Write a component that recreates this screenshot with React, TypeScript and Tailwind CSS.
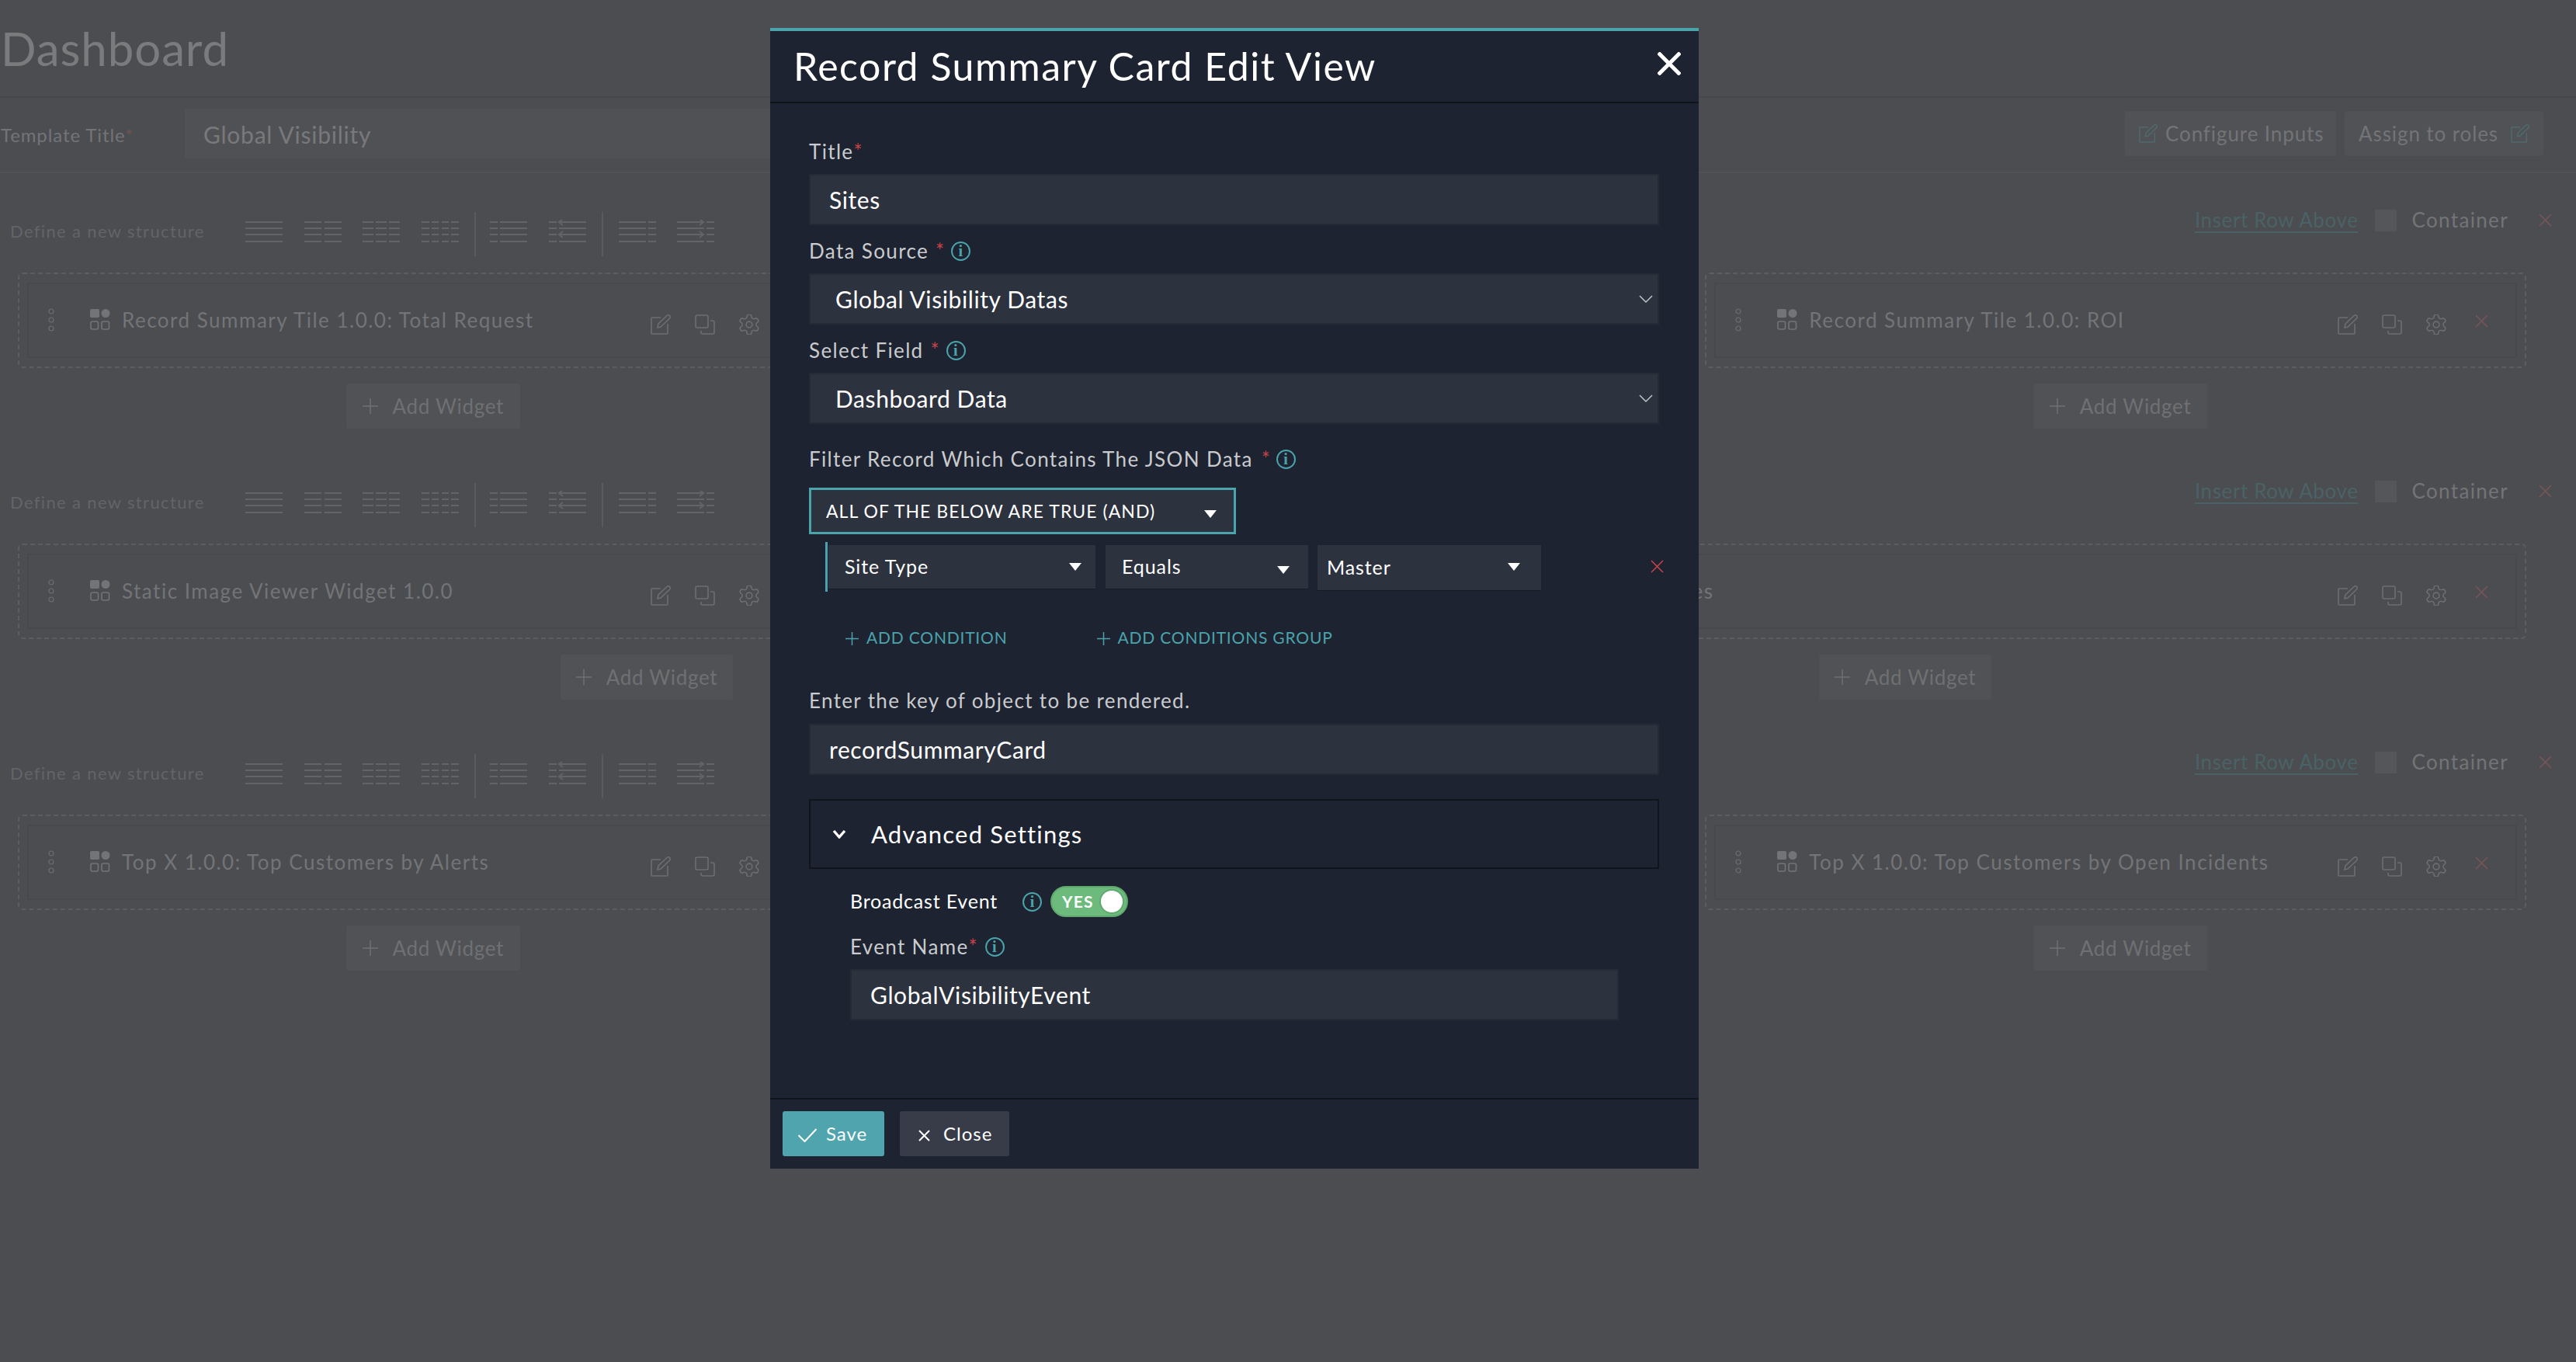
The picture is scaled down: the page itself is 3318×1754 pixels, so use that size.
import React from 'react';

const FONT = 'font-["Lato","Noto_Sans",sans-serif]';

type Seg = [number, number];

const full: Seg[] = [[0, 48]];
const two: Seg[] = [[0, 22], [26, 48]];
const three: Seg[] = [[0, 14], [17, 31], [34, 48]];
const four: Seg[] = [[0, 10], [13, 22], [26, 35], [38, 48]];
const wideLeft: Seg[] = [[0, 35], [38, 48]];
const wideRight: Seg[] = [[0, 10], [13, 48]];

const LineIcon = ({ segs, arrow }: { segs: Seg[]; arrow?: 'left' | 'right' }) => (
  <svg width="48" height="30" viewBox="0 0 48 30" className="shrink-0 text-[#636468]" stroke="currentColor" strokeWidth="2" fill="none">
    {[3, 11, 19, 28].map((y) => segs.map((s, i) => <line key={`${y}-${i}`} x1={s[0]} x2={s[1]} y1={y} y2={y} />))}
    {arrow === 'left' && (
      <>
        <path d="M18 -1 L13 3 L18 7" />
        <path d="M18 15 L13 19 L18 23" />
      </>
    )}
    {arrow === 'right' && (
      <>
        <path d="M29 -1 L34 3 L29 7" />
        <path d="M29 15 L34 19 L29 23" />
      </>
    )}
  </svg>
);

const Cross = ({ size, stroke = 1.6, className = '' }: { size: number; stroke?: number; className?: string }) => (
  <svg width={size} height={size} viewBox={`0 0 ${size} ${size}`} fill="none" stroke="currentColor" strokeWidth={stroke} className={`shrink-0 ${className}`}>
    <path d={`M1 1 L${size - 1} ${size - 1} M${size - 1} 1 L1 ${size - 1}`} />
  </svg>
);

const PlusMark = ({ size, className = '' }: { size: number; className?: string }) => (
  <svg width={size} height={size} viewBox={`0 0 ${size} ${size}`} fill="none" stroke="currentColor" strokeWidth="1.5" className={`shrink-0 ${className}`}>
    <path d={`M${size / 2} 0 V${size} M0 ${size / 2} H${size}`} />
  </svg>
);

const Chevron = () => (
  <svg width="18" height="10" viewBox="0 0 18 10" fill="none" stroke="#c9cbce" strokeWidth="1.4" className="shrink-0">
    <path d="M1 1 L9 9 L17 1" />
  </svg>
);

const EditIcon = ({ className = 'text-[#6d6e71]', size = 26 }: { className?: string; size?: number }) => (
  <svg width={size} height={size} viewBox="0 0 26 26" fill="none" stroke="currentColor" strokeWidth="1.6" className={`shrink-0 ${className}`}>
    <path d="M13 4 H2 a1 1 0 0 0 -1 1 V24 a1 1 0 0 0 1 1 H21 a1 1 0 0 0 1 -1 V12" />
    <path d="M9 17 L10 12 L21 1.5 a1.5 1.5 0 0 1 3.5 3.5 L13 16 Z" />
  </svg>
);

const CopyIcon = () => (
  <svg width="26" height="26" viewBox="0 0 26 26" fill="none" stroke="#6d6e71" strokeWidth="1.6" className="shrink-0">
    <rect x="1" y="1" width="16" height="16" rx="2" />
    <path d="M20 8 h3 a2 2 0 0 1 2 2 v13 a2 2 0 0 1 -2 2 h-13 a2 2 0 0 1 -2 -2 v-2" />
  </svg>
);

const GearIcon = () => (
  <svg width="26" height="26" viewBox="2 2 20 20" fill="none" stroke="#6d6e71" strokeWidth="1.2" className="shrink-0">
    <path d="M12.22 2h-.44a2 2 0 0 0-2 2v.18a2 2 0 0 1-1 1.73l-.43.25a2 2 0 0 1-2 0l-.15-.08a2 2 0 0 0-2.73.73l-.22.38a2 2 0 0 0 .73 2.73l.15.1a2 2 0 0 1 1 1.72v.51a2 2 0 0 1-1 1.74l-.15.09a2 2 0 0 0-.73 2.73l.22.38a2 2 0 0 0 2.73.73l.15-.08a2 2 0 0 1 2 0l.43.25a2 2 0 0 1 1 1.73V20a2 2 0 0 0 2 2h.44a2 2 0 0 0 2-2v-.18a2 2 0 0 1 1-1.73l.43-.25a2 2 0 0 1 2 0l.15.08a2 2 0 0 0 2.73-.73l.22-.39a2 2 0 0 0-.73-2.73l-.15-.08a2 2 0 0 1-1-1.74v-.5a2 2 0 0 1 1-1.74l.15-.09a2 2 0 0 0 .73-2.73l-.22-.38a2 2 0 0 0-2.73-.73l-.15.08a2 2 0 0 1-2 0l-.43-.25a2 2 0 0 1-1-1.73V4a2 2 0 0 0-2-2z" />
    <circle cx="12" cy="12" r="3" />
  </svg>
);

const TileIcon = () => (
  <svg width="26" height="27" viewBox="0 0 26 27" fill="none" className="shrink-0 text-[#737477]">
    <rect x="0" y="0" width="12" height="11" rx="2" fill="currentColor" />
    <circle cx="20" cy="5.5" r="5.5" fill="currentColor" />
    <rect x="1" y="16" width="9.5" height="10" rx="2" stroke="currentColor" strokeWidth="1.6" />
    <rect x="15" y="16" width="9.5" height="10" rx="2" stroke="currentColor" strokeWidth="1.6" />
  </svg>
);

const DragDots = () => (
  <svg width="8" height="30" viewBox="0 0 8 30" fill="none" stroke="#6d6e71" strokeWidth="1.2" className="shrink-0">
    <circle cx="4" cy="4" r="3" />
    <circle cx="4" cy="15" r="3" />
    <circle cx="4" cy="26" r="3" />
  </svg>
);

const InfoIcon = ({ className = '' }: { className?: string }) => (
  <span className={`inline-flex h-[25px] w-[25px] shrink-0 items-center justify-center rounded-full border-2 border-[#4ba3ac] font-["Liberation_Serif",serif] text-[20px] font-bold leading-none text-[#4ba3ac] ${className}`}>
    i
  </span>
);

const Req = ({ className = '' }: { className?: string }) => <span className={`text-[#c9444a] ${className}`}>*</span>;

const AddWidget = ({ className = '' }: { className?: string }) => (
  <div className={`flex h-[58px] items-center justify-center gap-[19px] rounded-[3px] bg-[#515255] text-[26px] tracking-[0.7px] text-[#6f7073] ${className}`}>
    <PlusMark size={20} />
    <span>Add Widget</span>
  </div>
);

const WidgetCard = ({ title, hasX, inner = 'w-full', addClass }: { title?: string; hasX?: boolean; inner?: string; addClass: string }) => (
  <div className="min-w-0">
    <div className="h-[123px] rounded-[6px] border-2 border-dashed border-[#5c5d60] px-[10px] pt-[11px]">
      <div className="h-[97px] border-2 border-[#49494d]">
        <div className={`flex h-full items-center pb-[2px] ${inner}`}>
          <span className="ml-[25px] mr-[46px] flex"><DragDots /></span>
          <TileIcon />
          <span className="ml-[15px] whitespace-nowrap pt-[2px] text-[26px] tracking-[1.5px] text-[#737477]">{title}</span>
          <div className="ml-auto flex items-center gap-[31px] pt-[12px]">
            <EditIcon />
            <CopyIcon />
            <GearIcon />
          </div>
          <span className="ml-[37px] mr-[35px] w-[17px] pt-[4px]">
            {hasX && <Cross size={17} stroke={1.5} className="text-[#7a5557]" />}
          </span>
        </div>
      </div>
    </div>
    <div className="flex justify-center pt-[20px]">
      <AddWidget className={addClass} />
    </div>
  </div>
);

const StructureBar = () => (
  <div className="flex h-[57px] items-center pl-[13px] pr-[31px]">
    <span className="w-[303px] pb-[8px] text-[22px] tracking-[1.35px] text-[#636468]">Define a new structure</span>
    <div className="mb-[7px] flex items-center gap-[27.5px]">
      <LineIcon segs={full} />
      <LineIcon segs={two} />
      <LineIcon segs={three} />
      <LineIcon segs={four} />
    </div>
    <div className="ml-[20px] mr-[18px] h-[57px] w-[2px] bg-[#5a5b5e]" />
    <div className="mb-[7px] flex items-center gap-[28px]">
      <LineIcon segs={wideRight} />
      <LineIcon segs={wideRight} arrow="left" />
    </div>
    <div className="mx-[20px] h-[57px] w-[2px] bg-[#5a5b5e]" />
    <div className="mb-[7px] flex items-center gap-[27px]">
      <LineIcon segs={wideLeft} />
      <LineIcon segs={wideLeft} arrow="right" />
    </div>
    <div className="ml-auto flex items-center pb-[36px] text-[26px]">
      <span className="border-b-2 border-[#4a6266] leading-[30px] tracking-[0.6px] text-[#4a6266]">Insert Row Above</span>
      <span className="ml-[22px] h-[28px] w-[28px] bg-[#555659]" />
      <span className="ml-[19px] tracking-[1.35px] text-[#737477]">Container</span>
      <Cross size={17} stroke={1.5} className="ml-[39px] text-[#7a5557]" />
    </div>
  </div>
);

const Field = ({ children, className = '' }: { children: React.ReactNode; className?: string }) => (
  <div className={`flex items-center border-2 border-[#252a35] bg-[#2c323e] text-[30px] tracking-[0.6px] text-white ${className}`}>
    {children}
  </div>
);

const Label = ({ children, className = '' }: { children: React.ReactNode; className?: string }) => (
  <div className={`flex items-center pb-[2px] text-[26px] tracking-[1.35px] text-[#c9cbce] ${className}`}>{children}</div>
);

const Caret = ({ className = '' }: { className?: string }) => (
  <svg width="16" height="10" viewBox="0 0 16 10" className={`shrink-0 ${className}`}>
    <path d="M0 0 H16 L8 10 Z" fill="#fff" />
  </svg>
);

const ConditionSelect = ({ label, className, caret = '' }: { label: string; className: string; caret?: string }) => (
  <div className={`flex shrink-0 items-center justify-between bg-[#2c323e] text-[25px] tracking-[0.9px] text-white shadow-[0_1px_0_#161a22] ${className}`}>
    <span>{label}</span>
    <Caret className={caret} />
  </div>
);

const AddLink = ({ label, className = '' }: { label: string; className?: string }) => (
  <span className={`flex items-center gap-[10px] text-[21px] uppercase tracking-[0.8px] text-[#4ba3ac] ${className}`}>
    <PlusMark size={17} className="mt-[3px]" />
    {label}
  </span>
);

const Modal = () => (
  <div className="absolute left-[992px] top-[36px] flex h-[1469px] w-[1196px] flex-col border-t-4 border-[#4ba3ac] bg-[#1d2330]">
    <div className="flex h-[93px] shrink-0 items-center justify-between border-b-2 border-[#11141b] pl-[30px] pr-[23px]">
      <span className="pb-[1px] text-[50px] tracking-[1.5px] text-white">Record Summary Card Edit View</span>
      <Cross size={30} stroke={5} className="mb-[7px] text-white" />
    </div>

    <div className="flex-1 pl-[50px] pr-[51px] pt-[45px]">
      <Label className="h-[36px]">Title<Req /></Label>
      <Field className="mt-[10px] h-[66px] pl-[24px]">Sites</Field>

      <Label className="mt-[16px] h-[36px]">Data Source<Req className="ml-[9px]" /><InfoIcon className="ml-[8px]" /></Label>
      <Field className="mt-[10px] h-[66px] justify-between pl-[32px] pr-[6px]">
        Global Visibility Datas
        <Chevron />
      </Field>

      <Label className="mt-[16px] h-[36px]">Select Field<Req className="ml-[9px]" /><InfoIcon className="ml-[8px]" /></Label>
      <Field className="mt-[10px] h-[66px] justify-between pl-[32px] pr-[6px]">
        Dashboard Data
        <Chevron />
      </Field>

      <Label className="mt-[28px] h-[36px]">Filter Record Which Contains The JSON Data<Req className="ml-[11px]" /><InfoIcon className="ml-[7px]" /></Label>

      <div className="mt-[18px] flex h-[60px] w-[550px] items-center justify-between border-[3px] border-[#4ba3ac] bg-[#2c323e] pl-[19px] pr-[22px] text-[23px] tracking-[1.05px] text-white">
        ALL OF THE BELOW ARE TRUE (AND)
        <Caret className="mt-[8px]" />
      </div>

      <div className="mt-[10px] ml-[21px] flex h-[64px] items-start border-l-[3px] border-[#4ba3ac] pl-[1px] pt-[4px]">
        <ConditionSelect label="Site Type" className="h-[56px] w-[344px] pl-[21px] pr-[18px]" />
        <ConditionSelect label="Equals" className="ml-[13px] h-[56px] w-[261px] pl-[21px] pr-[24px]" caret="mt-[8px]" />
        <ConditionSelect label="Master" className="ml-[12px] h-[58px] w-[288px] pl-[12px] pr-[27px]" caret="mb-[2px]" />
        <Cross size={17} stroke={1.5} className="ml-[141px] mt-[19px] text-[#c9444a]" />
      </div>

      <div className="mt-[43px] flex h-[32px] items-center pl-[47px]">
        <AddLink label="Add Condition" />
        <AddLink label="Add Conditions Group" className="ml-[115px]" />
      </div>

      <Label className="mt-[48px] h-[36px]">Enter the key of object to be rendered.</Label>
      <Field className="mt-[11px] h-[66px] pl-[24px]">recordSummaryCard</Field>

      <div className="mt-[31px] flex h-[90px] items-center border-2 border-[#11141b] pl-[28px]">
        <svg width="18" height="12" viewBox="0 0 18 12" fill="none" stroke="#fff" strokeWidth="3.4">
          <path d="M2 2 L9 10 L16 2" />
        </svg>
        <span className="ml-[32px] text-[31px] tracking-[1.2px] text-white">Advanced Settings</span>
      </div>

      <div className="pl-[53px] pr-[52px]">
        <div className="mt-[21px] flex h-[42px] items-center">
          <span className="w-[222px] text-[25px] tracking-[0.8px] text-white">Broadcast Event</span>
          <InfoIcon />
          <div className="ml-[11px] flex h-[40px] w-[100px] items-center justify-between rounded-full border-2 border-[#5fa86e] bg-[#6cbb7c] pl-[13px] pr-[5px] text-[21px] font-bold tracking-[1.2px] text-white">
            YES
            <span className="h-[28px] w-[28px] rounded-full bg-white shadow-[0_0_0_2px_#5fa86e]" />
          </div>
        </div>
        <Label className="mt-[20px] h-[36px]">Event Name<Req /><InfoIcon className="ml-[9px]" /></Label>
        <Field className="mt-[10px] h-[66px] pl-[24px]">GlobalVisibilityEvent</Field>
      </div>
    </div>

    <div className="flex h-[91px] shrink-0 items-start gap-[20px] border-t-2 border-[#11141b] pl-[16px] pt-[15px] text-[24px] tracking-[1px] text-white">
      <div className="flex h-[58px] w-[131px] items-center gap-[12px] rounded-[3px] bg-[#4fa4ae] pl-[20px]">
        <svg width="24" height="18" viewBox="0 0 24 18" fill="none" stroke="currentColor" strokeWidth="2" className="mt-[4px] shrink-0">
          <path d="M0.5 9 L8.5 17 L23.5 1" />
        </svg>
        Save
      </div>
      <div className="flex h-[58px] w-[141px] items-center gap-[17px] rounded-[3px] bg-[#373c48] pl-[24px]">
        <Cross size={15} stroke={2} className="mt-[4px]" />
        Close
      </div>
    </div>
  </div>
);

export default function App() {
  return (
    <div className={`relative h-[1754px] w-[3318px] overflow-hidden bg-[#4c4d51] ${FONT}`}>
      <div className="flex h-[126px] items-center border-b-2 border-[#47484c] pl-[1px]">
        <span className="text-[60px] leading-none tracking-[0.9px] text-[#7a7b7d]">Dashboard</span>
      </div>

      <div className="flex h-[97px] items-center border-b-2 border-[#515255] pb-[3px] pl-[1px] pr-[42px]">
        <span className="w-[237px] pt-[4px] text-[24px] tracking-[0.9px] text-[#737477]">Template Title<span className="text-[#6e5254]">*</span></span>
        <div className="flex h-[64px] w-[1000px] items-center bg-[#505154] pl-[24px] pt-[2px] text-[30px] tracking-[0.75px] text-[#78797c]">Global Visibility</div>
        <div className="ml-auto flex gap-[11px] text-[26px] tracking-[0.9px] text-[#737477]">
          <div className="flex h-[58px] w-[272px] items-center gap-[10px] rounded-[3px] bg-[#515255] pl-[18px]">
            <EditIcon size={24} className="text-[#4e6a6d]" />
            Configure Inputs
          </div>
          <div className="flex h-[58px] w-[256px] items-center gap-[16px] rounded-[3px] bg-[#515255] pl-[18px]">
            Assign to roles
            <EditIcon size={24} className="text-[#4e6a6d]" />
          </div>
        </div>
      </div>

      <div className="mt-[50px]">
        <StructureBar />
        <div className="mt-[21px] grid grid-cols-3 gap-[29px] pl-[23px] pr-[64px]">
          <WidgetCard title="Record Summary Tile 1.0.0: Total Request" addClass="ml-[12px] w-[224px]" />
          <WidgetCard addClass="w-[224px]" />
          <WidgetCard title="Record Summary Tile 1.0.0: ROI" hasX addClass="ml-[12px] w-[224px]" />
        </div>
      </div>

      <div className="mt-[70px]">
        <StructureBar />
        <div className="mt-[21px] grid grid-cols-[1620px_1600px] gap-[11px] pl-[23px]">
          <WidgetCard title="Static Image Viewer Widget 1.0.0" inner="w-[1030px]" addClass="w-[222px]" />
          <WidgetCard title="Record Summary Tile 1.0.0: Sites" hasX addClass="w-[222px]" />
        </div>
      </div>

      <div className="mt-[70px]">
        <StructureBar />
        <div className="mt-[21px] grid grid-cols-3 gap-[29px] pl-[23px] pr-[64px]">
          <WidgetCard title="Top X 1.0.0: Top Customers by Alerts" addClass="ml-[12px] w-[224px]" />
          <WidgetCard addClass="w-[224px]" />
          <WidgetCard title="Top X 1.0.0: Top Customers by Open Incidents" hasX addClass="ml-[12px] w-[224px]" />
        </div>
      </div>

      <Modal />
    </div>
  );
}
